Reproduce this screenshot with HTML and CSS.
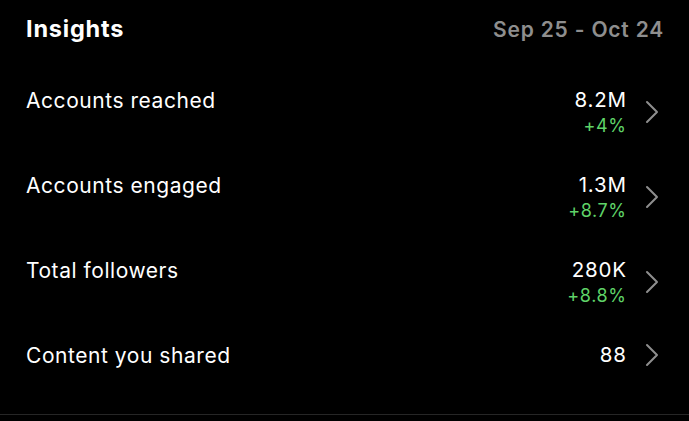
FILE: index.html
```html
<!DOCTYPE html>
<html lang="en">
<head>
<meta charset="utf-8">
<title>Insights</title>
<link rel="stylesheet" href="styles.css">
</head>
<body>
<div class="panel">
  <header class="head">
    <h1 class="title">Insights</h1>
    <span class="range">Sep 25 - Oct 24</span>
  </header>
  <div class="row">
    <span class="label">Accounts reached</span>
    <div class="right">
      <div class="values">
        <div class="value">8.2M</div>
        <div class="delta">+4%</div>
      </div>
      <svg class="chev" width="14" height="24" viewBox="0 0 14 24"><path d="M2 2 L12 12 L2 22" fill="none" stroke="#8e8e8e" stroke-width="2" stroke-linecap="round" stroke-linejoin="round"/></svg>
    </div>
  </div>
  <div class="row">
    <span class="label">Accounts engaged</span>
    <div class="right">
      <div class="values">
        <div class="value">1.3M</div>
        <div class="delta">+8.7%</div>
      </div>
      <svg class="chev" width="14" height="24" viewBox="0 0 14 24"><path d="M2 2 L12 12 L2 22" fill="none" stroke="#8e8e8e" stroke-width="2" stroke-linecap="round" stroke-linejoin="round"/></svg>
    </div>
  </div>
  <div class="row">
    <span class="label">Total followers</span>
    <div class="right">
      <div class="values">
        <div class="value">280K</div>
        <div class="delta">+8.8%</div>
      </div>
      <svg class="chev" width="14" height="24" viewBox="0 0 14 24"><path d="M2 2 L12 12 L2 22" fill="none" stroke="#8e8e8e" stroke-width="2" stroke-linecap="round" stroke-linejoin="round"/></svg>
    </div>
  </div>
  <div class="row">
    <span class="label">Content you shared</span>
    <div class="right">
      <div class="values">
        <div class="value">88</div>
      </div>
      <svg class="chev" width="14" height="24" viewBox="0 0 14 24"><path d="M2 2 L12 12 L2 22" fill="none" stroke="#8e8e8e" stroke-width="2" stroke-linecap="round" stroke-linejoin="round"/></svg>
    </div>
  </div>
  <div class="divider"></div>
</div>
</body>
</html>
```
FILE: styles.css
```css
html, body {
  margin: 0;
  padding: 0;
  background: #000;
}
body {
  font-family: Inter, "Noto Sans", "Liberation Sans", sans-serif;
  color: #fff;
  width: 689px;
  height: 421px;
  overflow: hidden;
}
.panel {
  padding: 0 26px 0 26px;
  display: flex;
  flex-direction: column;
}
.head {
  display: flex;
  justify-content: space-between;
  align-items: baseline;
  height: 88px;
  padding-top: 15px;
  box-sizing: border-box;
}
.title {
  margin: 0;
  font-size: 23.5px;
  font-weight: 700;
  line-height: 28px;
  letter-spacing: 0.8px;
}
.range {
  font-size: 21px;
  font-weight: 600;
  color: #8e8e8e;
  line-height: 28px;
  letter-spacing: 0.8px;
  margin-right: -1px;
}
.row {
  display: flex;
  justify-content: space-between;
  align-items: flex-start;
  height: 85px;
}
.label {
  font-size: 21px;
  line-height: 25px;
  letter-spacing: 0.55px;
}
.right {
  display: flex;
  align-items: center;
  gap: 19px;
}
.values {
  text-align: right;
}
.value {
  font-size: 20.5px;
  line-height: 24px;
  letter-spacing: 0.8px;
  margin-right: -0.8px;
}
.delta {
  font-size: 18px;
  line-height: 20px;
  margin-top: 4px;
  letter-spacing: 0.6px;
  margin-right: -0.6px;
  color: #5fd368;
}
.chev {
  display: block;
  margin-right: 4px;
}
.divider {
  height: 1px;
  background: #262626;
  margin: -14px -26px 0 -26px;
}
```
